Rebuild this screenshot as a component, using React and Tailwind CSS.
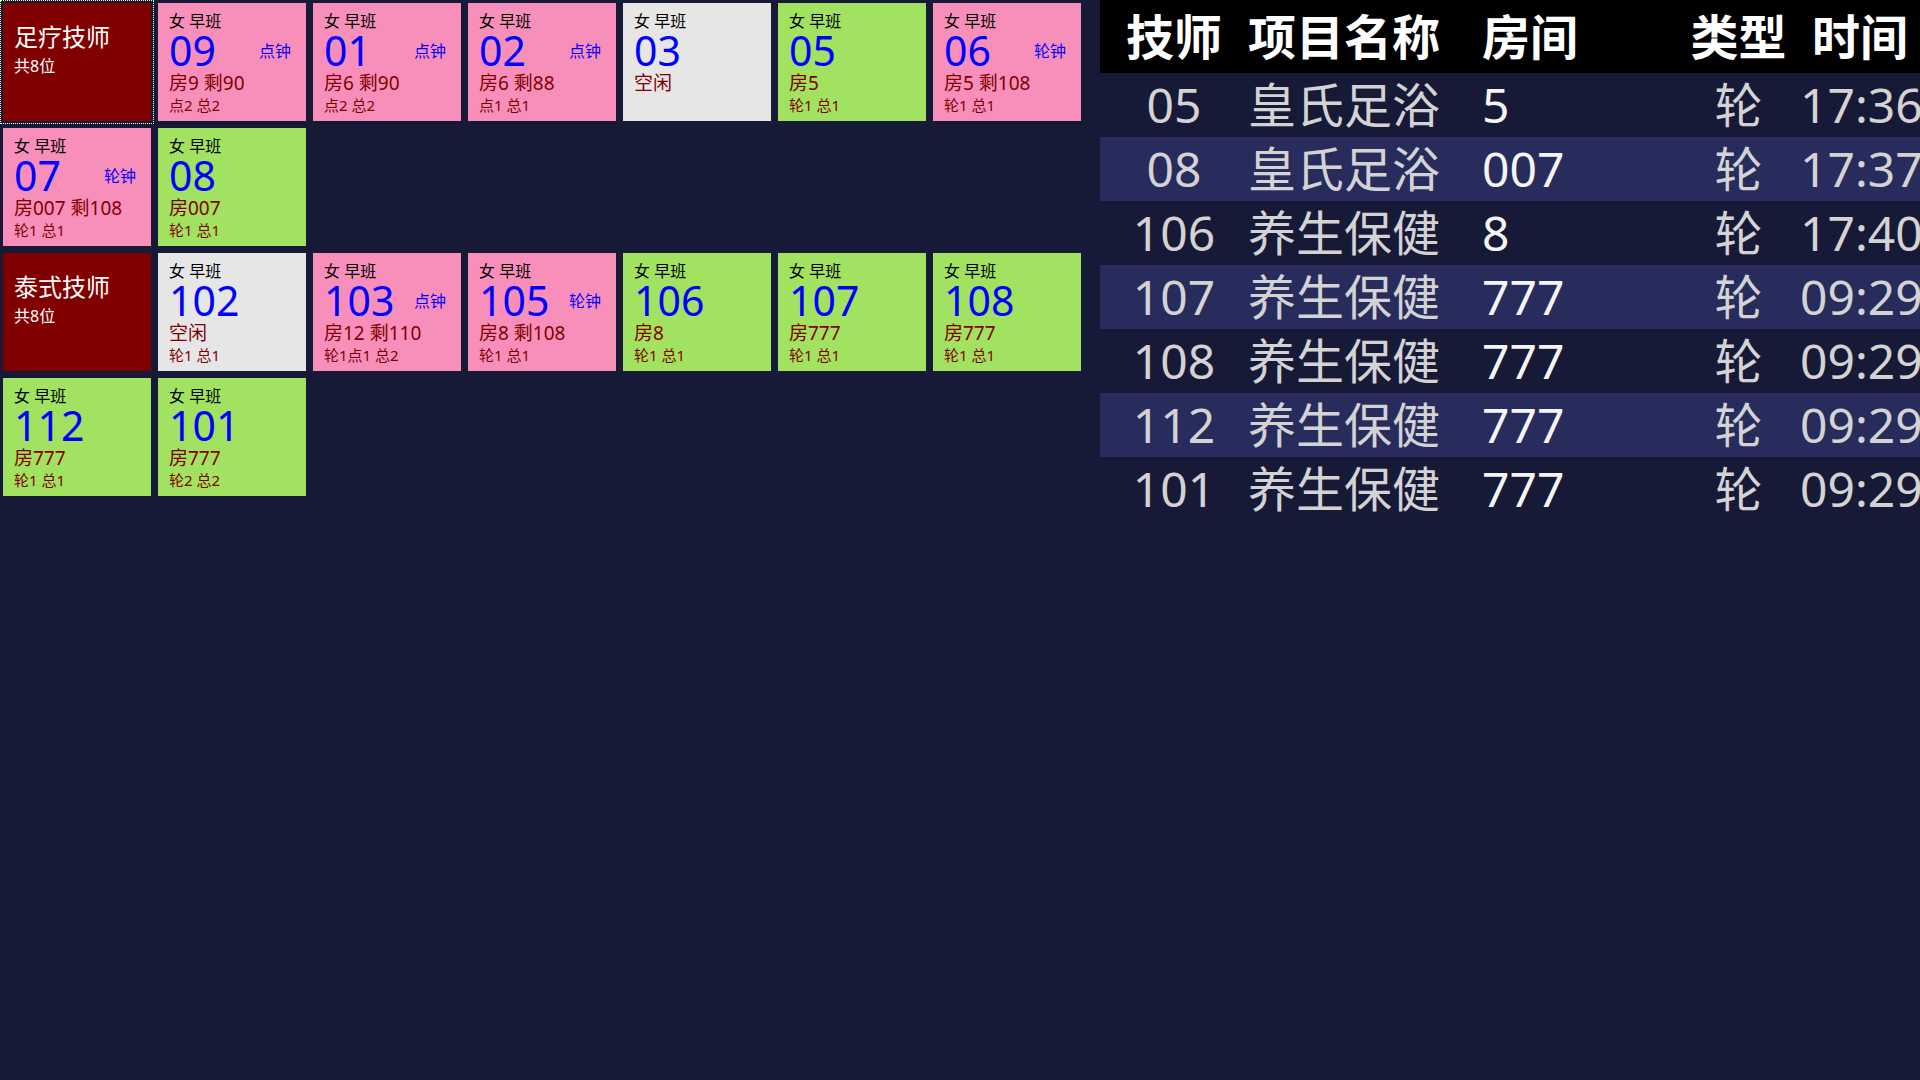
const BUSY = "bg-[#f88fba]";
const IDLE = "bg-[#e6e6e6]";
const READY = "bg-[#a1e260]";

const groups = [
  {
    name: "足疗技师",
    count: "共8位",
    selected: true,
    staff: [
      { no: "09", tone: BUSY, tag: "点钟", room: "房9 剩90", total: "点2 总2" },
      { no: "01", tone: BUSY, tag: "点钟", room: "房6 剩90", total: "点2 总2" },
      { no: "02", tone: BUSY, tag: "点钟", room: "房6 剩88", total: "点1 总1" },
      { no: "03", tone: IDLE, room: "空闲", total: "" },
      { no: "05", tone: READY, room: "房5", total: "轮1 总1" },
      { no: "06", tone: BUSY, tag: "轮钟", room: "房5 剩108", total: "轮1 总1" },
      { no: "07", tone: BUSY, tag: "轮钟", room: "房007 剩108", total: "轮1 总1" },
      { no: "08", tone: READY, room: "房007", total: "轮1 总1" },
    ],
  },
  {
    name: "泰式技师",
    count: "共8位",
    staff: [
      { no: "102", tone: IDLE, room: "空闲", total: "轮1 总1" },
      { no: "103", tone: BUSY, tag: "点钟", room: "房12 剩110", total: "轮1点1 总2" },
      { no: "105", tone: BUSY, tag: "轮钟", room: "房8 剩108", total: "轮1 总1" },
      { no: "106", tone: READY, room: "房8", total: "轮1 总1" },
      { no: "107", tone: READY, room: "房777", total: "轮1 总1" },
      { no: "108", tone: READY, room: "房777", total: "轮1 总1" },
      { no: "112", tone: READY, room: "房777", total: "轮1 总1" },
      { no: "101", tone: READY, room: "房777", total: "轮2 总2" },
    ],
  },
];

const orders = [
  ["05", "皇氏足浴", "5", "轮", "17:36"],
  ["08", "皇氏足浴", "007", "轮", "17:37"],
  ["106", "养生保健", "8", "轮", "17:40"],
  ["107", "养生保健", "777", "轮", "09:29"],
  ["108", "养生保健", "777", "轮", "09:29"],
  ["112", "养生保健", "777", "轮", "09:29"],
  ["101", "养生保健", "777", "轮", "09:29"],
];

function GroupCard({ name, count, selected }) {
  return (
    <div
      className={
        selected
          ? "h-[118px] bg-[#800000] px-[11px] pt-[19px] text-white outline-1 outline-offset-2 outline-dotted outline-[#ffffd0]"
          : "h-[118px] bg-[#800000] px-[11px] pt-[19px] text-white"
      }
    >
      <h2 className="text-[24px] leading-[30px]">{name}</h2>
      <p className="text-[16px] leading-[28px]">{count}</p>
    </div>
  );
}

function StaffCard({ no, tone, tag, room, total }) {
  return (
    <div className={`h-[118px] pt-2 pr-[15px] pl-[11px] whitespace-nowrap text-[#800000] ${tone}`}>
      <p className="text-[16px] leading-[20px] text-black">女 早班</p>
      <div className="flex items-end justify-between text-[#0000ff]">
        <span className="text-[41px] leading-[38px]">{no}</span>
        {tag && <span className="text-[16px] leading-[36px]">{tag}</span>}
      </div>
      <p className="text-[19px] leading-[28px]">{room}</p>
      <p className="text-[15px] leading-[16px]">{total}</p>
    </div>
  );
}

export default function App() {
  return (
    <div className="grid min-h-screen grid-cols-[minmax(0,55fr)_minmax(0,41fr)] items-start bg-[#171a37] font-['Noto_Sans','Noto_Sans_CJK_SC',sans-serif]">
      <main className="flex flex-col gap-[7px] p-[3px]">
        {groups.map((group) => (
          <section
            key={group.name}
            className="grid grid-cols-[repeat(auto-fill,148px)] gap-[7px]"
          >
            <GroupCard {...group} />
            {group.staff.map((person) => (
              <StaffCard key={person.no} {...person} />
            ))}
          </section>
        ))}
      </main>
      <aside>
        <table className="w-full table-fixed border-collapse whitespace-nowrap text-[#d3d3d3]">
          <colgroup>
            <col className="w-[148px]" />
            <col className="w-[234px]" />
            <col />
            <col className="w-[123px]" />
            <col className="w-[120px]" />
          </colgroup>
          <thead>
            <tr className="h-[73px] bg-black text-[48px] leading-[64px] text-white">
              <th className="p-0 font-bold">技师</th>
              <th className="p-0 text-left font-bold">项目名称</th>
              <th className="p-0 text-left font-bold">房间</th>
              <th className="p-0 font-bold">类型</th>
              <th className="p-0 font-bold">时间</th>
            </tr>
          </thead>
          <tbody>
            {orders.map(([no, item, room, kind, time]) => (
              <tr key={no} className="h-16 text-[48px] leading-[64px] even:bg-[#272c5d]">
                <td className="p-0 text-center">{no}</td>
                <td className="p-0">{item}</td>
                <td className="p-0 text-[#f5f5f5]">{room}</td>
                <td className="p-0 text-center">{kind}</td>
                <td className="p-0">{time}</td>
              </tr>
            ))}
          </tbody>
        </table>
      </aside>
    </div>
  );
}
